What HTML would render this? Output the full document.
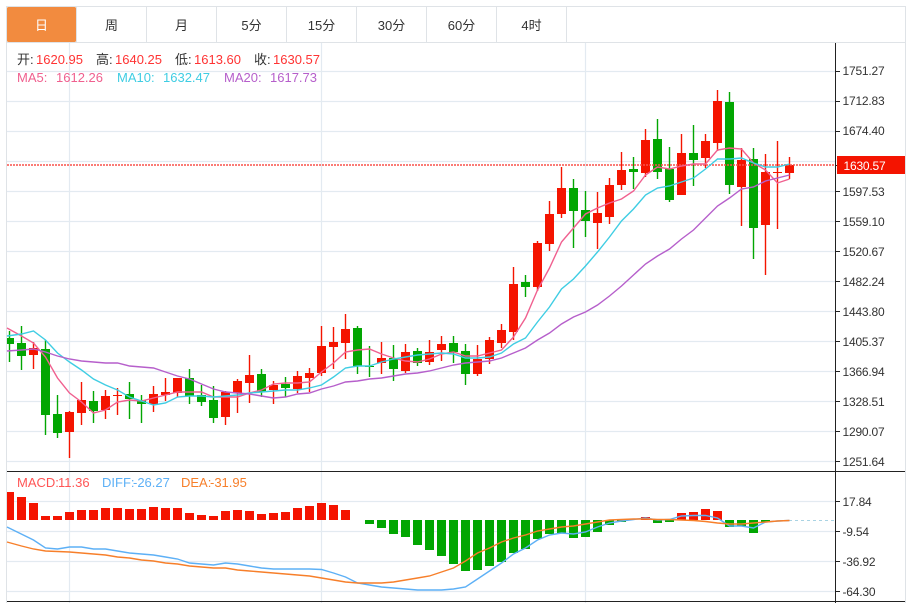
<!DOCTYPE html>
<html><head><meta charset="utf-8"><style>
html,body{margin:0;padding:0;background:#fff;width:913px;height:603px;overflow:hidden}
svg{position:absolute;left:0;top:0;display:block}
text{font-family:"Liberation Sans","Noto Sans CJK SC",sans-serif}
.t{font-size:13px;fill:#333;text-anchor:middle}
.l{font-size:13px}
.a{font-size:12px;fill:#333;letter-spacing:-.2px}
</style></head><body>
<svg width="913" height="603" viewBox="0 0 913 603">
<!-- grid -->
<path fill="none" stroke="#e3eaf1" stroke-width="1.2" d="M7 71.5H835M7 101.5H835M7 131.5H835M7 161.5H835M7 191.5H835M7 221.5H835M7 251.5H835M7 281.5H835M7 311.5H835M7 341.5H835M7 371.5H835M7 401.5H835M7 431.5H835M7 461.5H835M7 501.5H835M7 531.5H835M7 561.5H835M7 591.5H835M69.5 43V603M321.5 43V603M585.5 43V603"/>
<!-- frame / tabs -->
<path fill="none" stroke="#dfe3e7" d="M6.5 603V6.5H905.5V603M6.5 42.5H905.5M76.5 7V42M146.5 7V42M216.5 7V42M286.5 7V42M356.5 7V42M426.5 7V42M496.5 7V42M566.5 7V42"/>
<rect x="7" y="7" width="69" height="35" rx="1.5" fill="#f28b3f"/>
<text class="t" x="41.5" y="30" style="fill:#fff">日</text>
<text class="t" x="111.5" y="30">周</text>
<text class="t" x="181.5" y="30">月</text>
<text class="t" x="251.5" y="30">5分</text>
<text class="t" x="321.5" y="30">15分</text>
<text class="t" x="391.5" y="30">30分</text>
<text class="t" x="461.5" y="30">60分</text>
<text class="t" x="531.5" y="30">4时</text>
<!-- wicks -->
<path fill="none" stroke="#f41400" stroke-width="1.4" d="M33.5 342V369M69.5 411V458M81.5 382V425M105.5 390V419M117.5 388V415M153.5 386V412M165.5 378V401M177.5 378V397M225.5 391V425M237.5 379V413M249.5 355V403M273.5 381V404M297.5 371V393M309.5 368V392M321.5 326V376M333.5 327V369M345.5 314V359M381.5 342V374M405.5 344V373M429.5 340V365M441.5 336V361M477.5 345V376M489.5 337V364M501.5 324V348M513.5 267V340M537.5 241V291M549.5 201V251M561.5 167V218M597.5 192V249M609.5 178V224M621.5 152V190M645.5 129V177M681.5 134V195M705.5 134V168M717.5 90V151M741.5 148V226M765.5 154V275M777.5 141V229M789.5 157V179"/>
<path fill="none" stroke="#02a602" stroke-width="1.4" d="M9.5 331V362M21.5 326V370M45.5 340V435M57.5 395V438M93.5 391V423M129.5 382V419M141.5 395V423M189.5 369V404M201.5 385V406M213.5 386V423M261.5 369V397M285.5 377V397M357.5 326V374M369.5 346V377M393.5 345V381M417.5 348V366M453.5 336V363M465.5 344V385M525.5 275V297M573.5 179V248M585.5 191V237M633.5 157V189M657.5 119V179M669.5 147V202M693.5 125V186M729.5 92V194M753.5 148V259"/>
<!-- bodies -->
<path fill="#f41400" d="M29 348h9v7h-9zM65 412h9v20h-9zM77 400h9v13h-9zM101 396h9v14h-9zM113 395h9v1h-9zM149 394h9v10h-9zM161 392h9v3h-9zM173 378h9v15h-9zM221 392h9v25h-9zM233 381h9v12h-9zM245 375h9v8h-9zM269 385h9v5h-9zM293 376h9v13h-9zM305 373h9v5h-9zM317 346h9v27h-9zM329 342h9v5h-9zM341 329h9v14h-9zM377 358h9v5h-9zM401 352h9v19h-9zM425 352h9v10h-9zM437 344h9v6h-9zM473 359h9v15h-9zM485 340h9v19h-9zM497 330h9v13h-9zM509 284h9v48h-9zM533 243h9v44h-9zM545 214h9v30h-9zM557 188h9v26h-9zM593 213h9v10h-9zM605 185h9v32h-9zM617 170h9v15h-9zM641 140h9v33h-9zM677 153h9v42h-9zM701 141h9v17h-9zM713 101h9v42h-9zM737 160h9v27h-9zM761 172h9v53h-9zM773 172h9v1h-9zM785 165h9v8h-9z"/>
<path fill="#02a602" d="M7 338h7v6h-7zM17 343h9v13h-9zM41 349h9v66h-9zM53 414h9v19h-9zM89 401h9v10h-9zM125 394h9v5h-9zM137 400h9v4h-9zM185 378h9v18h-9zM197 395h9v7h-9zM209 400h9v18h-9zM257 374h9v18h-9zM281 384h9v4h-9zM353 328h9v38h-9zM365 366h9v1h-9zM389 358h9v11h-9zM413 351h9v12h-9zM449 343h9v9h-9zM461 351h9v23h-9zM521 282h9v5h-9zM569 188h9v23h-9zM581 210h9v11h-9zM629 169h9v3h-9zM653 139h9v33h-9zM665 169h9v31h-9zM689 153h9v7h-9zM725 102h9v83h-9zM749 159h9v69h-9z"/>
<!-- current price dashed -->
<path fill="none" stroke="#f8504a" stroke-opacity=".75" stroke-width="2" stroke-dasharray="2 1" d="M7 165H835"/>
<!-- MA lines -->
<polyline fill="none" stroke="#f0608f" stroke-width="1.4" points="7,328 21.5,336 33.5,343 45.5,357 57.5,378 69.5,393 81.5,402 93.5,413 105.5,410 117.5,402 129.5,400 141.5,401 153.5,398 165.5,395 177.5,392 189.5,392 201.5,392 213.5,397 225.5,397 237.5,397 249.5,393 261.5,390 273.5,384 285.5,383 297.5,383 309.5,382 321.5,372 333.5,363 345.5,352 357.5,350 369.5,349 381.5,354 393.5,358 405.5,361 417.5,362 429.5,359 441.5,354 453.5,352 465.5,356 477.5,356 489.5,353 501.5,350 513.5,337 525.5,318 537.5,290 549.5,268 561.5,242 573.5,228 585.5,214 597.5,208 609.5,203 621.5,199 633.5,191 645.5,175 657.5,167 669.5,169 681.5,166 693.5,164 705.5,164 717.5,150 729.5,148 741.5,149 753.5,163 765.5,170 777.5,183 789.5,179"/>
<polyline fill="none" stroke="#3fcde3" stroke-width="1.4" points="7,336 21.5,334 33.5,331 45.5,340 57.5,353 69.5,362 81.5,370 93.5,379 105.5,385 117.5,390 129.5,397 141.5,401 153.5,405 165.5,403 177.5,397 189.5,396 201.5,396 213.5,397 225.5,396 237.5,395 249.5,393 261.5,392 273.5,391 285.5,390 297.5,390 309.5,388 321.5,385 333.5,377 345.5,368 357.5,366 369.5,366 381.5,362 393.5,359 405.5,357 417.5,355 429.5,354 441.5,353 453.5,354 465.5,358 477.5,358 489.5,357 501.5,353 513.5,344 525.5,338 537.5,322 549.5,307 561.5,289 573.5,279 585.5,266 597.5,252 609.5,237 621.5,221 633.5,209 645.5,195 657.5,188 669.5,186 681.5,182 693.5,178 705.5,169 717.5,159 729.5,159 741.5,158 753.5,163 765.5,167 777.5,167 789.5,164"/>
<polyline fill="none" stroke="#b65fcb" stroke-width="1.4" points="7,351 21.5,350 33.5,349 45.5,352 57.5,356 69.5,359 81.5,361 93.5,362 105.5,363 117.5,363 129.5,366 141.5,367 153.5,368 165.5,372 177.5,376 189.5,379 201.5,384 213.5,389 225.5,392 237.5,393 249.5,394 261.5,396 273.5,398 285.5,397 297.5,394 309.5,393 321.5,389 333.5,386 345.5,382 357.5,381 369.5,379 381.5,378 393.5,376 405.5,374 417.5,373 429.5,371 441.5,368 453.5,365 465.5,363 477.5,362 489.5,361 501.5,358 513.5,353 525.5,348 537.5,340 549.5,333 561.5,324 573.5,317 585.5,312 597.5,305 609.5,296 621.5,286 633.5,275 645.5,264 657.5,256 669.5,249 681.5,239 693.5,230 705.5,218 717.5,206 729.5,198 741.5,189 753.5,187 765.5,181 777.5,178 789.5,175"/>
<!-- MACD -->
<path fill="none" stroke="#a9d3e3" stroke-dasharray="3 3" d="M789 520.5H835"/>
<path fill="#f41400" d="M7 492h7v28h-7zM17 497h9v23h-9zM29 503h9v17h-9zM41 516h9v4h-9zM53 516h9v4h-9zM65 512h9v8h-9zM77 510h9v10h-9zM89 510h9v10h-9zM101 508h9v12h-9zM113 508h9v12h-9zM125 509h9v11h-9zM137 509h9v11h-9zM149 507h9v13h-9zM161 508h9v12h-9zM173 508h9v12h-9zM185 513h9v7h-9zM197 515h9v5h-9zM209 516h9v4h-9zM221 511h9v9h-9zM233 510h9v10h-9zM245 511h9v9h-9zM257 514h9v6h-9zM269 513h9v7h-9zM281 512h9v8h-9zM293 508h9v12h-9zM305 506h9v14h-9zM317 503h9v17h-9zM329 505h9v15h-9zM341 510h9v10h-9zM641 517h9v3h-9zM677 513h9v7h-9zM689 512h9v8h-9zM701 509h9v11h-9zM713 511h9v9h-9z"/>
<path fill="#02a602" d="M365 520h9v4h-9zM377 520h9v8h-9zM389 520h9v14h-9zM401 520h9v17h-9zM413 520h9v25h-9zM425 520h9v30h-9zM437 520h9v36h-9zM449 520h9v44h-9zM461 520h9v51h-9zM473 520h9v50h-9zM485 520h9v46h-9zM497 520h9v42h-9zM509 520h9v33h-9zM521 520h9v29h-9zM533 520h9v19h-9zM545 520h9v14h-9zM557 520h9v13h-9zM569 520h9v18h-9zM581 520h9v17h-9zM593 520h9v12h-9zM605 520h9v5h-9zM617 520h9v2h-9zM653 520h9v3h-9zM665 520h9v2h-9zM725 520h9v7h-9zM737 520h9v6h-9zM749 520h9v13h-9zM761 520h9v2h-9z"/>
<polyline fill="none" stroke="#5db0f6" stroke-width="1.4" points="7,527 33.5,540 45.5,548 57.5,549 69.5,547 81.5,547 93.5,549 105.5,549 117.5,551 129.5,553 141.5,554 153.5,555 165.5,557 177.5,559 189.5,563 201.5,564 213.5,565 225.5,563 237.5,564 249.5,566 261.5,568 273.5,569 285.5,569 297.5,569 309.5,569 321.5,569.5 333.5,573 345.5,577 357.5,583 369.5,585 381.5,587 393.5,588 405.5,589 417.5,590 429.5,590 441.5,590 453.5,589 465.5,587 477.5,579 489.5,571 501.5,563 513.5,554 525.5,548 537.5,540 549.5,535 561.5,533 573.5,534 585.5,532 597.5,527 609.5,523 621.5,521 633.5,519.5 645.5,518 657.5,520 669.5,519.5 681.5,516 693.5,515.5 705.5,515.5 717.5,518 729.5,526 741.5,526 753.5,528 765.5,522 777.5,521 789.5,520.5"/>
<polyline fill="none" stroke="#f77f2a" stroke-width="1.4" points="7,542 21.5,546 33.5,549 45.5,551 57.5,551.5 69.5,552 81.5,553 93.5,554 105.5,555 117.5,557 129.5,558 141.5,560 153.5,561 165.5,563 177.5,564 189.5,566 201.5,567 213.5,568 225.5,568 237.5,570 249.5,571 261.5,572 273.5,573 285.5,574 297.5,575 309.5,576 321.5,578 333.5,580 345.5,582 357.5,583 369.5,583 381.5,583 393.5,582 405.5,580 417.5,578 429.5,576 441.5,572 453.5,568 465.5,561 477.5,553 489.5,548 501.5,542 513.5,538 525.5,535 537.5,531 549.5,529 561.5,527 573.5,526 585.5,524 597.5,522 609.5,520 621.5,519.5 633.5,519 645.5,519 657.5,519.5 669.5,519.5 681.5,520 693.5,520.5 705.5,521.5 717.5,523 729.5,524 741.5,524 753.5,523 765.5,522 777.5,521 789.5,520.5"/>
<!-- axes -->
<path fill="none" stroke="#222" d="M835.5 43V603M7 471.5H905M7 601.5H905M836 71.5h4M836 101.5h4M836 131.5h4M836 165.5h2M836 191.5h4M836 221.5h4M836 251.5h4M836 281.5h4M836 311.5h4M836 341.5h4M836 371.5h4M836 401.5h4M836 431.5h4M836 461.5h4M836 501.5h4M836 531.5h4M836 561.5h4M836 591.5h4"/>
<!-- axis labels -->
<text class="a" x="842.5" y="75">1751.27</text>
<text class="a" x="842.5" y="105">1712.83</text>
<text class="a" x="842.5" y="135">1674.40</text>
<text class="a" x="842.5" y="196">1597.53</text>
<text class="a" x="842.5" y="226">1559.10</text>
<text class="a" x="842.5" y="256">1520.67</text>
<text class="a" x="842.5" y="286">1482.24</text>
<text class="a" x="842.5" y="316">1443.80</text>
<text class="a" x="842.5" y="346">1405.37</text>
<text class="a" x="842.5" y="376">1366.94</text>
<text class="a" x="842.5" y="406">1328.51</text>
<text class="a" x="842.5" y="436">1290.07</text>
<text class="a" x="842.5" y="466">1251.64</text>
<text class="a" x="842.5" y="506">17.84</text>
<text class="a" x="842.5" y="536">-9.54</text>
<text class="a" x="842.5" y="566">-36.92</text>
<text class="a" x="842.5" y="596">-64.30</text>
<rect x="837" y="156" width="68" height="18" fill="#f41400"/>
<text class="a" x="843.5" y="170" style="fill:#fff">1630.57</text>
<!-- legend -->
<text class="l" x="17" y="64" fill="#333">开:</text><text class="l" x="36" y="64" fill="#f33">1620.95</text>
<text class="l" x="96" y="64" fill="#333">高:</text><text class="l" x="115" y="64" fill="#f33">1640.25</text>
<text class="l" x="175" y="64" fill="#333">低:</text><text class="l" x="194" y="64" fill="#f33">1613.60</text>
<text class="l" x="254" y="64" fill="#333">收:</text><text class="l" x="273" y="64" fill="#f33">1630.57</text>
<text class="l" x="17" y="82" fill="#f0608f">MA5:</text><text class="l" x="56" y="82" fill="#f0608f">1612.26</text>
<text class="l" x="117" y="82" fill="#3fcde3">MA10:</text><text class="l" x="163" y="82" fill="#3fcde3">1632.47</text>
<text class="l" x="224" y="82" fill="#b65fcb">MA20:</text><text class="l" x="270" y="82" fill="#b65fcb">1617.73</text>
<text class="l" x="17" y="487" fill="#f55">MACD:</text><text class="l" x="58" y="487" fill="#f55">11.36</text>
<text class="l" x="102" y="487" fill="#5db0f6">DIFF:</text><text class="l" x="133" y="487" fill="#5db0f6">-26.27</text>
<text class="l" x="181" y="487" fill="#f77f2a">DEA:</text><text class="l" x="210" y="487" fill="#f77f2a">-31.95</text>
</svg>
</body></html>
